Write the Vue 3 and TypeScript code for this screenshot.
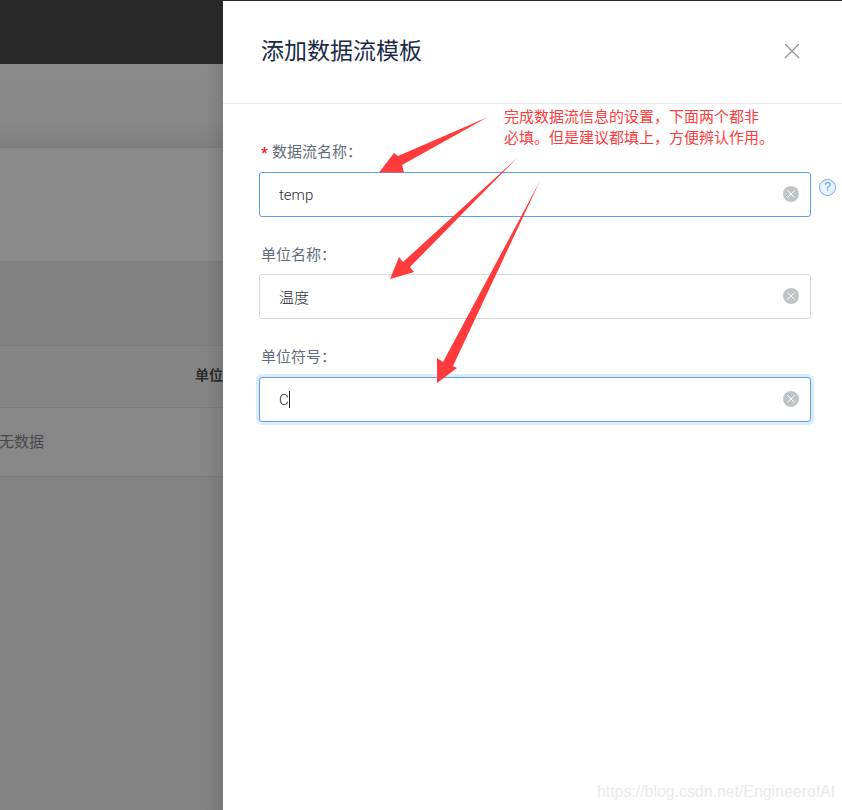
<script setup lang="ts">
interface Field {
  label: string
  value: string
  required?: boolean
  state: 'active' | 'idle' | 'focus'
  help?: boolean
}

const fields: Field[] = [
  { label: '数据流名称\uFF1A', value: 'temp', required: true, state: 'active', help: true },
  { label: '单位名称\uFF1A', value: '温度', state: 'idle' },
  { label: '单位符号\uFF1A', value: 'C', state: 'focus' },
]

const noteLines: string[] = [
  '完成数据流信息的设置\uFF0C下面两个都非',
  '必填。但是建议都填上\uFF0C方便辨认作用。',
]
</script>

<template>
  <div class="page">
    <aside class="backdrop">
      <div class="topbar"></div>
      <div class="band band-a"></div>
      <div class="band band-b"></div>
      <div class="band band-c"></div>
      <div class="band band-head"><span class="col-title">单位</span></div>
      <div class="band band-row"><span class="empty">无数据</span></div>
      <div class="band band-rest"></div>
    </aside>

    <section class="drawer">
      <header class="drawer-head">
        <h1 class="title">添加数据流模板</h1>
        <svg class="close" width="16" height="16" viewBox="0 0 16 16">
          <path d="M1 1 15 15M15 1 1 15" stroke="#8f8f8f" stroke-width="1.1" fill="none" />
        </svg>
      </header>

      <form class="form">
        <div v-for="f in fields" :key="f.label" class="group" :class="f.state">
          <label class="label"><span v-if="f.required" class="star">*</span>{{ f.label }}</label>
          <div class="row">
            <div class="input">
              <span class="text">{{ f.value }}</span>
              <span v-if="f.state === 'focus'" class="caret"></span>
              <svg class="clear" width="16" height="16" viewBox="0 0 16 16">
                <circle cx="8" cy="8" r="8" fill="#c1c4c6" />
                <path d="M4.5 4.5 11.500 11.500M11.500 4.500 4.500 11.500" stroke="#fff" stroke-width="1" />
              </svg>
            </div>
            <span v-if="f.help" class="help">?</span>
          </div>
        </div>
      </form>
    </section>

    <svg class="arrows" width="842" height="810" viewBox="0 0 842 810">
      <path d="M488 117 398 156 394 153 379 172.500 404 172.500 402 165Z" />
      <path d="M517 158 403 262 399 257 390 279 414 272 410 267Z" />
      <path d="M540 181 443 362 437 358 437 383 457 368 453 366Z" />
    </svg>

    <p class="note"><span v-for="line in noteLines" :key="line" class="note-line">{{ line }}</span></p>
    <span class="watermark">https://blog.csdn.net/EngineerofAI</span>
  </div>
</template>

<style scoped>
.page {
  position: relative;
  display: flex;
  width: 842px;
  height: 810px;
  overflow: hidden;
  background: #282828;
  font-family: "Noto Sans CJK SC", "Noto Sans", sans-serif;
}

.backdrop {
  position: relative;
  display: flex;
  flex-direction: column;
  flex: 0 0 223px;
  overflow: hidden;
  background: #828282;
}
.backdrop::after {
  content: "";
  position: absolute;
  top: 64px;
  right: 0;
  bottom: 0;
  width: 18px;
  background: linear-gradient(to right, rgba(0, 0, 0, 0), rgba(0, 0, 0, 0.09));
}
.topbar {
  flex: 0 0 64px;
  background: #282828;
}
.band {
  box-sizing: border-box;
  border-bottom: 1px solid #7c7c7c;
}
.band-a {
  flex: 0 0 84px;
  background: linear-gradient(to bottom, #8a8a8a 0%, #888 70%, #7f7f7f 100%);
}
.band-b {
  flex: 0 0 114px;
  background: #8a8a8a;
}
.band-c {
  flex: 0 0 84px;
  background: #818181;
}
.band-head {
  display: flex;
  align-items: center;
  flex: 0 0 62px;
  padding: 0 0 5px 195px;
  background: #858585;
}
.band-row {
  display: flex;
  align-items: center;
  flex: 0 0 69px;
  padding-bottom: 4px;
  background: #878787;
}
.band-rest {
  flex: 1;
  border-bottom: 0;
}
.col-title {
  flex: none;
  font-size: 14px;
  font-weight: 700;
  color: #2d2d2d;
}
.empty {
  margin-left: -1px;
  font-size: 15px;
  color: #4a4a4a;
}

.drawer {
  flex: 1;
  margin-top: 1px;
  background: #fff;
}
.drawer-head {
  box-sizing: border-box;
  display: flex;
  align-items: center;
  justify-content: space-between;
  height: 103px;
  padding: 0 42px 2px 38px;
  border-bottom: 1px solid #e9e9e9;
}
.title {
  margin: 0 0 4px;
  font-size: 23px;
  font-weight: 400;
  line-height: 32px;
  color: #1b2a47;
}

.form {
  padding: 37px 0 0 36px;
}
.group + .group {
  margin-top: 27px;
}
.label {
  display: block;
  height: 20px;
  margin-bottom: 11px;
  padding-left: 2px;
  font-size: 15px;
  line-height: 20px;
  color: #626c80;
}
.idle .label {
  margin-bottom: 10px;
}
.star {
  margin-right: 4px;
  font-family: "Liberation Sans", sans-serif;
  font-size: 18px;
  line-height: 0;
  vertical-align: -3px;
  color: #f00;
}
.row {
  display: flex;
  align-items: flex-start;
}
.input {
  box-sizing: border-box;
  display: flex;
  align-items: center;
  width: 552px;
  height: 45px;
  padding: 0 11px 0 19px;
  border: 1px solid #d9d9d9;
  border-radius: 3px;
  background: #fff;
}
.active .input {
  border-color: #57a2f6;
}
.focus .input {
  border-color: #5fa2ee;
  box-shadow: 0 0 0 3px rgba(87, 162, 246, 0.2);
}
.text {
  font-family: Roboto, "Noto Sans CJK SC", sans-serif;
  font-size: 15px;
  font-weight: 300;
  color: #2a2e36;
}
.caret {
  width: 1px;
  height: 17px;
  background: #222;
}
.clear {
  margin: 0 0 1px auto;
}
.help {
  box-sizing: border-box;
  width: 17px;
  height: 17px;
  margin: 7px 0 0 8px;
  border: 1px solid #6ea8f5;
  border-radius: 50%;
  background: #eaf3ff;
  font-family: "Liberation Sans", sans-serif;
  font-size: 12px;
  line-height: 15px;
  text-align: center;
  color: #5c9bee;
}

.arrows {
  position: absolute;
  top: 0;
  left: 0;
  fill: #ff3b3b;
  pointer-events: none;
}
.note {
  position: absolute;
  top: 106px;
  left: 504px;
  margin: 0;
  font-size: 15px;
  line-height: 20.5px;
  white-space: nowrap;
  color: #ff3b3b;
}
.note-line {
  display: block;
}
.watermark {
  position: absolute;
  top: 782px;
  left: 597px;
  font-family: "Liberation Sans", sans-serif;
  font-size: 16px;
  letter-spacing: -0.06px;
  line-height: 20px;
  white-space: nowrap;
  color: #e9e9e9;
}
</style>
